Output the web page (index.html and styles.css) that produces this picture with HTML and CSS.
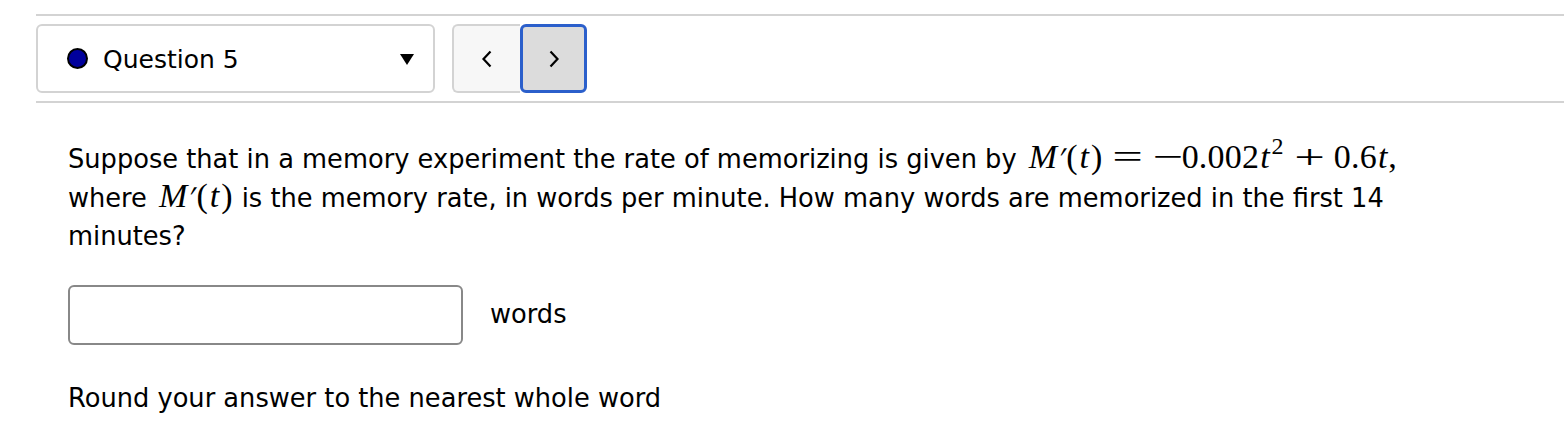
FILE: index.html
```html
<!DOCTYPE html>
<html>
<head>
<meta charset="utf-8">
<link rel="stylesheet" href="styles.css">
</head>
<body>
<div class="page">
  <div class="nav">
    <div class="select">
      <span class="dot"></span>
      <span class="qlabel">Question 5</span>
      <span class="caret"></span>
    </div>
    <div class="pager">
      <button class="pbtn prev" aria-label="Previous">
        <svg width="14" height="20" viewBox="0 0 14 20"><path d="M10.5 2.5 L3.5 10 L10.5 17.5" fill="none" stroke="#000" stroke-width="2.2"/></svg>
      </button>
      <button class="pbtn next" aria-label="Next">
        <svg width="14" height="20" viewBox="0 0 14 20"><path d="M3.5 2.5 L10.5 10 L3.5 17.5" fill="none" stroke="#000" stroke-width="2.2"/></svg>
      </button>
    </div>
  </div>
  <div class="question">
    <p class="stem">Suppose that in a memory experiment the rate of memorizing is given by <span class="math"><i class="mi">M</i><span class="prime">′</span><span class="mo">(</span><i class="t">t</i><span class="mo">)</span><span class="op rel">=</span><span class="op neg">−</span><span class="num">0.002</span><i class="t">t</i><sup>2</sup><span class="op bin">+</span><span class="num">0.6</span><i class="t">t</i>,</span><br>where <span class="math"><i class="mi">M</i><span class="prime">′</span><span class="mo">(</span><i class="t">t</i><span class="mo">)</span></span> is the memory rate, in words per minute. How many words are memorized in the first 14<br>minutes?</p>
    <div class="answer">
      <input class="field" type="text">
      <span class="unit">words</span>
    </div>
    <p class="hint">Round your answer to the nearest whole word</p>
  </div>
</div>
</body>
</html>
```
FILE: styles.css
```css
html, body {
  margin: 0;
  padding: 0;
  background: #fff;
}
body {
  font-family: "DejaVu Sans", sans-serif;
  color: #000;
}
.page {
  padding: 14px 0 0 36px;
}
.nav {
  border-top: 2px solid #d3d3d3;
  border-bottom: 2px solid #d3d3d3;
  padding: 8px 0 8px 0;
  display: flex;
  align-items: center;
  gap: 17px;
}
.select {
  box-sizing: border-box;
  width: 399px;
  height: 69px;
  border: 2px solid #d3d3d3;
  border-radius: 6px;
  display: flex;
  align-items: center;
  padding: 0 19px 0 29px;
}
.dot {
  width: 17px;
  height: 17px;
  border-radius: 50%;
  background: #00009c;
  border: 2px solid #000;
  margin-right: 15px;
}
.qlabel {
  font-size: 25px;
  flex: 1;
  position: relative;
  top: 1px;
}
.caret {
  width: 0;
  height: 0;
  border-left: 7px solid transparent;
  border-right: 7px solid transparent;
  border-top: 11px solid #000;
  margin-top: 2px;
}
.pager {
  display: flex;
}
.pbtn {
  box-sizing: border-box;
  height: 69px;
  display: flex;
  align-items: center;
  justify-content: center;
  padding: 0;
  font: inherit;
}
.prev {
  width: 68px;
  background: #f7f7f7;
  border: 2px solid #d3d3d3;
  border-right: none;
  border-radius: 6px 0 0 6px;
}
.next {
  width: 67px;
  background: #dcdcdc;
  border: 3px solid #2b5fcb;
  border-radius: 6px;
}
.question {
  padding: 37px 0 0 32px;
}
.stem {
  margin: 0;
  font-size: 25.7px;
  line-height: 38.5px;
}
.math {
  font-family: "Liberation Serif", "DejaVu Serif", serif;
  font-size: 34px;
  line-height: 20px;
  white-space: nowrap;
  margin-left: 4px;
}
.math i {
  font-style: italic;
}
.math .mi {
  letter-spacing: 1.5px;
}
.math .t {
  margin-left: 1px;
  margin-right: 1px;
}
.math .mo {
  margin: 0 1px;
}
.math .prime {
  display: inline-block;
  font-size: 30px;
  line-height: 0;
  transform: skewX(-22deg);
  margin-left: -1px;
  margin-right: 1px;
}
.math .num {
  letter-spacing: 0.2px;
}
.math .op {
  display: inline-block;
  transform: scaleX(1.6);
}
.math .rel {
  margin: 0 17px 0 15px;
}
.math .neg {
  margin: 0 4px 0 4px;
}
.math .bin {
  margin: 0 15px 0 16px;
}
.math sup {
  font-size: 24px;
  line-height: 0;
  vertical-align: 14px;
  margin-left: 1px;
}
.answer {
  margin-top: 29px;
  display: flex;
  align-items: center;
  gap: 27px;
}
.field {
  box-sizing: border-box;
  width: 395px;
  height: 60px;
  border: 2px solid #888;
  border-radius: 6px;
  margin: 0;
}
.unit {
  font-size: 25.7px;
  position: relative;
  top: -1px;
}
.hint {
  margin: 38px 0 0 0;
  font-size: 25.7px;
}
```
